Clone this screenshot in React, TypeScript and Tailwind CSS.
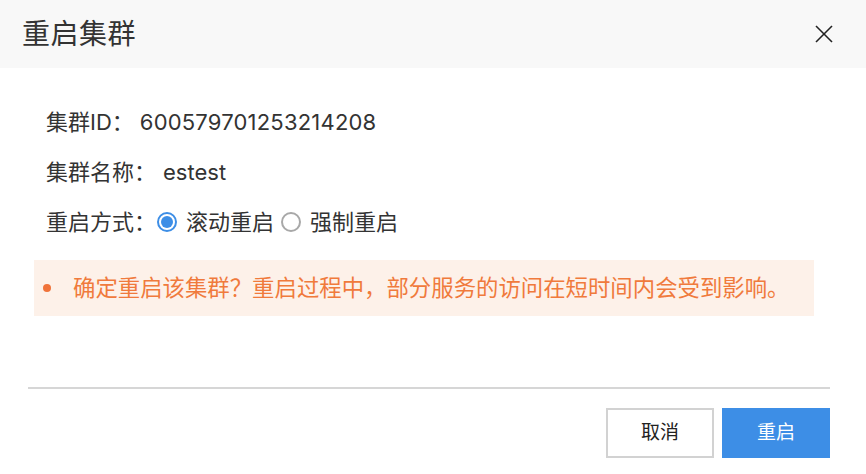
import { useState } from 'react';

const font = { fontFamily: 'Inter, "Noto Sans CJK SC", sans-serif' };

function Radio({ checked, label, onClick }: { checked: boolean; label: string; onClick: () => void }) {
  return (
    <button type="button" onClick={onClick} className="flex items-center">
      <span
        className={
          checked
            ? 'flex h-[20px] w-[20px] items-center justify-center rounded-full border-2 border-[#3d8ee6]'
            : 'flex h-[20px] w-[20px] items-center justify-center rounded-full border-2 border-[#a8a8a8]'
        }
      >
        {checked && <span className="block h-[12px] w-[12px] rounded-full bg-[#3d8ee6]" />}
      </span>
      <span className="ml-[9px] text-[22px] leading-[30px] text-[#333]">{label}</span>
    </button>
  );
}

export default function App() {
  const [mode, setMode] = useState<'rolling' | 'force'>('rolling');

  return (
    <div className="h-[474px] w-[866px] overflow-hidden bg-white" style={font}>
      <div className="flex h-[68px] items-center justify-between bg-[#f8f8f8] pl-[22px] pr-[33px]">
        <span className="text-[28px] leading-none tracking-[0.5px] text-[#333]">重启集群</span>
        <button type="button" aria-label="close" className="text-[#222]">
          <svg width="18" height="18" viewBox="0 0 18 18" fill="none" stroke="currentColor" strokeWidth="1.6">
            <line x1="1" y1="1" x2="17" y2="17" />
            <line x1="17" y1="1" x2="1" y2="17" />
          </svg>
        </button>
      </div>

      <div className="flex flex-col gap-[20px] pl-[46px] pt-[39px] text-[22px] leading-[30px] text-[#333]">
        <div className="flex">
          <span>集群ID：</span>
          <span className="ml-[6px] tracking-[0.2px]">600579701253214208</span>
        </div>
        <div className="flex">
          <span>集群名称：</span>
          <span className="ml-[7px]">estest</span>
        </div>
        <div className="flex items-center">
          <span>重启方式：</span>
          <div className="ml-[1px] flex items-center gap-[7px]">
            <Radio checked={mode === 'rolling'} label="滚动重启" onClick={() => setMode('rolling')} />
            <Radio checked={mode === 'force'} label="强制重启" onClick={() => setMode('force')} />
          </div>
        </div>
      </div>

      <div className="ml-[34px] mt-[23px] flex h-[56px] w-[780px] items-center bg-[#fdf1e9] pl-[9px]">
        <span className="block h-[8px] w-[8px] rounded-full bg-[#f0733a]" />
        <span className="ml-[22px] text-[22.4px] leading-none text-[#f07a3c]">
          确定重启该集群？重启过程中，部分服务的访问在短时间内会受到影响。
        </span>
      </div>

      <div className="ml-[28px] mr-[36px] mt-[71px] border-t-2 border-[#d6d6d6] pt-[19px]">
        <div className="flex justify-end gap-[8px]">
          <button
            type="button"
            className="h-[50px] w-[108px] border-2 border-[#d2d2d2] bg-white text-[19px] text-[#222]"
          >
            取消
          </button>
          <button type="button" className="h-[50px] w-[108px] bg-[#3d8ee6] text-[19px] text-white">
            重启
          </button>
        </div>
      </div>
    </div>
  );
}
